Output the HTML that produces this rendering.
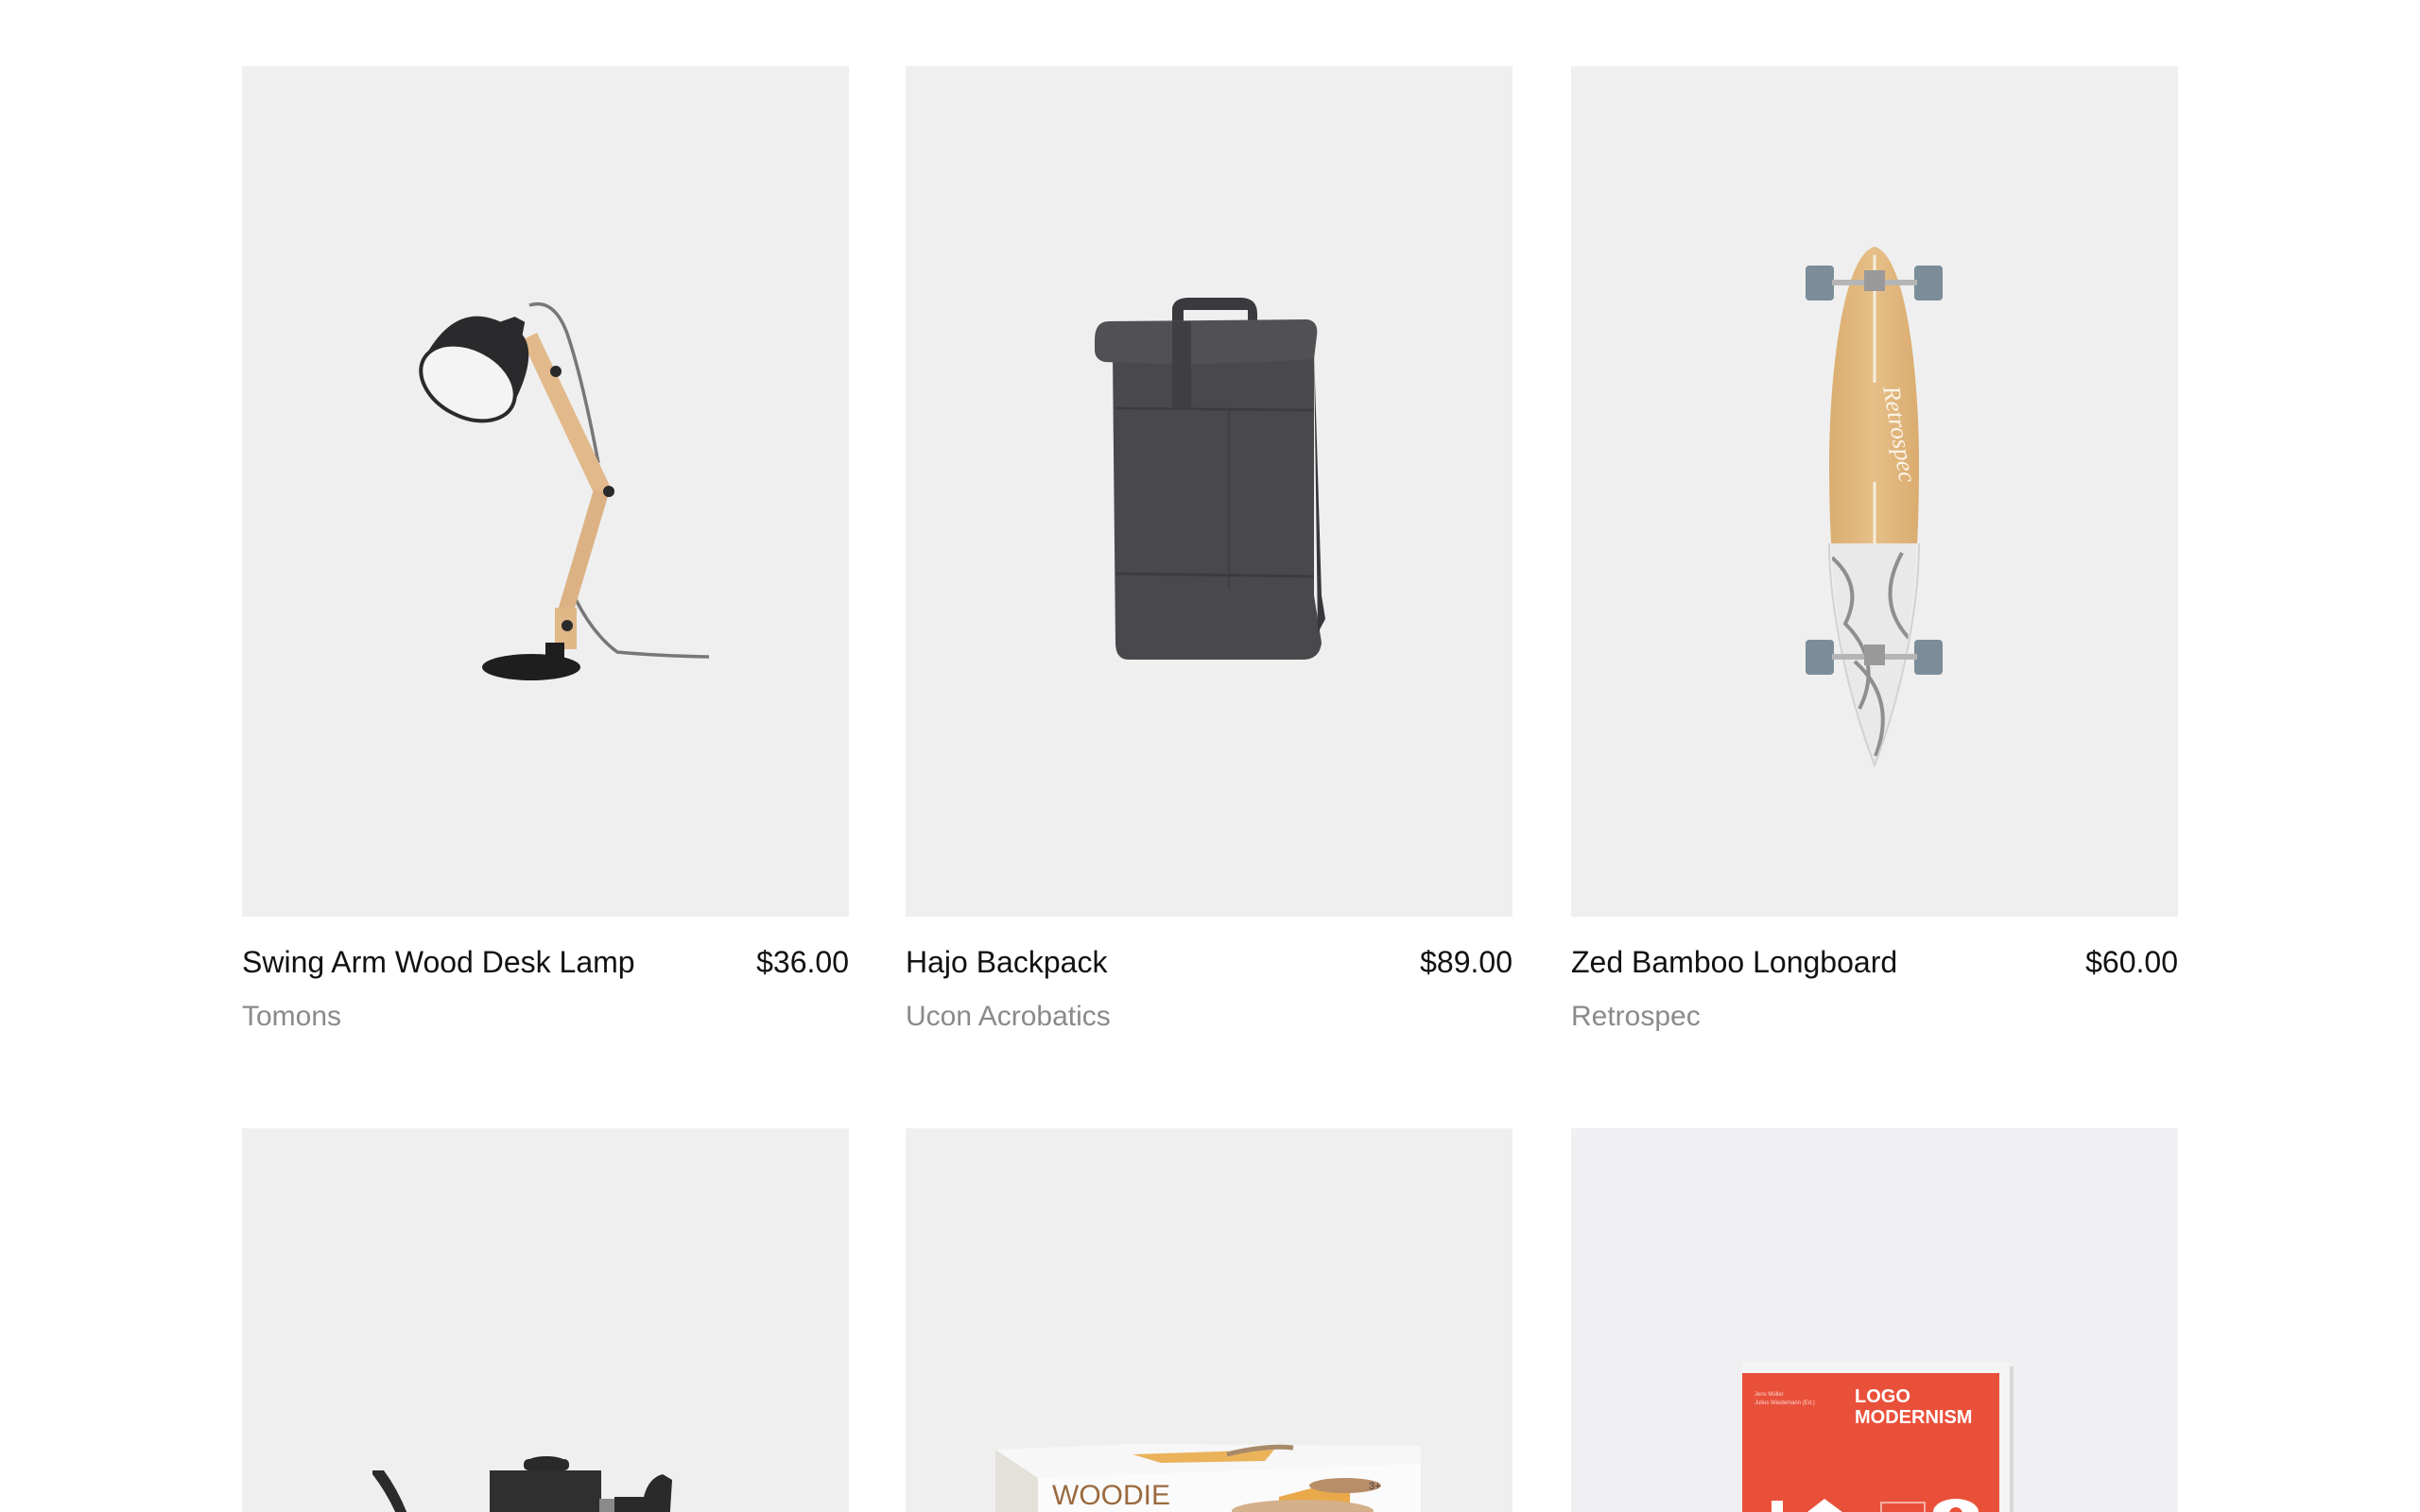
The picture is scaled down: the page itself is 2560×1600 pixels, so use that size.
<!DOCTYPE html>
<html><head><meta charset="utf-8">
<style>
html,body{margin:0;padding:0;background:#fff;width:2560px;height:1600px;overflow:hidden;font-family:"Liberation Sans",sans-serif;}
#wrap{position:relative;width:2560px;height:1600px;overflow:hidden;}
.card{position:absolute;width:642px;}
.img{width:642px;height:900px;background:#efefef;position:relative;overflow:hidden;}
.img.short{height:406px;}
.img svg{position:absolute;left:0;top:0;}
.row{display:flex;justify-content:space-between;margin-top:28px;font-size:32px;color:#111;line-height:40px;}
.brand{font-size:30px;color:#8a8a8a;margin-top:18px;line-height:40px;}
</style></head><body><div id="wrap">

<div class="card" style="left:256px;top:70px">
 <div class="img">
  <svg width="642" height="900" viewBox="0 0 642 900">
   <path d="M 304 253 Q 330 245 344 283 Q 360 330 377 420" stroke="#777" stroke-width="3.5" fill="none"/>
   <path d="M 351 560 Q 370 600 397 620 Q 440 624 494 625" stroke="#777" stroke-width="3.5" fill="none"/>
   <path d="M 296 290 L 312 282 L 390 446 L 374 456 Z" fill="#e2b98a"/>
   <path d="M 372 448 L 388 452 L 350 580 L 334 576 Z" fill="#dcb284"/>
   <rect x="331" y="573" width="23" height="44" fill="#e0b888"/>
   <circle cx="388" cy="450" r="6" fill="#2a2a2a"/>
   <circle cx="344" cy="592" r="6" fill="#2a2a2a"/>
   <circle cx="332" cy="323" r="6" fill="#2a2a2a"/>
   <g transform="rotate(28 239 335)">
    <path d="M 186 335 Q 186 265 239 262 L 250 250 L 262 250 L 266 263 Q 292 275 292 335 Z" fill="#2a2a2c"/>
    <ellipse cx="239" cy="335" rx="53" ry="36" fill="#f4f4f4" stroke="#2a2a2c" stroke-width="4"/>
   </g>
   <rect x="321" y="610" width="20" height="24" fill="#1e1e1e"/>
   <ellipse cx="306" cy="636" rx="52" ry="14" fill="#1e1e1e"/>
  </svg>
 </div>
 <div class="row"><span>Swing Arm Wood Desk Lamp</span><span>$36.00</span></div>
 <div class="brand">Tomons</div>
</div>

<div class="card" style="left:958px;top:70px">
 <div class="img">
  <svg width="642" height="900" viewBox="0 0 642 900">
   <path d="M 282 272 L 282 256 Q 284 245 300 245 L 356 245 Q 372 246 372 262 L 372 272 L 362 272 L 362 258 L 294 258 L 294 272 Z" fill="#3a3a3e"/>
   <path d="M 219 305 L 432 300 L 432 560 L 440 610 Q 438 628 420 628 L 236 628 Q 222 628 222 610 Z" fill="#48484d"/>
   <path d="M 432 300 L 440 560 L 444 585 L 436 600 Z" fill="#38383c"/>
   <path d="M 200 290 Q 200 270 215 270 L 425 268 Q 437 270 435 285 L 432 310 Q 320 318 210 313 Q 200 310 200 300 Z" fill="#505055"/>
   <rect x="282" y="270" width="20" height="92" fill="#3e3e43"/>
   <path d="M 222 362 L 432 364" stroke="#3c3c40" stroke-width="2.5"/>
   <path d="M 342 364 L 342 554" stroke="#3c3c40" stroke-width="1.5"/>
   <path d="M 222 537 L 432 540" stroke="#3c3c40" stroke-width="3"/>
  </svg>
 </div>
 <div class="row"><span>Hajo Backpack</span><span>$89.00</span></div>
 <div class="brand">Ucon Acrobatics</div>
</div>

<div class="card" style="left:1662px;top:70px">
 <div class="img">
  <svg width="642" height="900" viewBox="0 0 642 900">
   <defs>
    <linearGradient id="bw" x1="0" x2="1"><stop offset="0" stop-color="#d8a86a"/><stop offset=".5" stop-color="#e6bf88"/><stop offset="1" stop-color="#d7a769"/></linearGradient>
    <clipPath id="bc"><path d="M321 191 C 355 200 368 330 368 420 C 368 560 355 650 321 740 C 287 650 273 560 273 420 C 273 330 287 200 321 191 Z"/></clipPath>
   </defs>
   <g clip-path="url(#bc)">
    <rect x="260" y="180" width="120" height="325" fill="url(#bw)"/>
    <rect x="260" y="505" width="120" height="245" fill="#e9e9e9"/>
    <path d="M 276 520 Q 310 550 290 590 Q 330 630 305 680 M 350 515 Q 320 570 362 610 M 300 630 Q 345 670 322 730 M 278 640 Q 300 660 285 700" stroke="#8f8f8f" stroke-width="4" fill="none"/>
   </g>
   <path d="M 273 505 C 273 560 287 650 321 740 C 355 650 368 560 368 505" stroke="#d2d2d2" stroke-width="2" fill="none"/>
   <line x1="321" y1="200" x2="321" y2="335" stroke="#f7eedf" stroke-width="3"/>
   <line x1="321" y1="440" x2="321" y2="505" stroke="#f7eedf" stroke-width="3"/>
   <text font-size="26" fill="#fbf4e8" font-style="italic" font-family="Liberation Serif, serif" transform="translate(330 340) rotate(80)">Retrospec</text>
   <rect x="248" y="211" width="30" height="37" rx="4" fill="#7b8d98"/>
   <rect x="363" y="211" width="30" height="37" rx="4" fill="#7b8d98"/>
   <rect x="276" y="226" width="90" height="6" fill="#b5b5b5"/>
   <rect x="310" y="216" width="22" height="22" fill="#999"/>
   <rect x="248" y="607" width="30" height="37" rx="4" fill="#7b8d98"/>
   <rect x="363" y="607" width="30" height="37" rx="4" fill="#7b8d98"/>
   <rect x="276" y="622" width="90" height="6" fill="#b5b5b5"/>
   <rect x="310" y="612" width="22" height="22" fill="#999"/>
  </svg>
 </div>
 <div class="row"><span>Zed Bamboo Longboard</span><span>$60.00</span></div>
 <div class="brand">Retrospec</div>
</div>

<div class="card" style="left:256px;top:1194px">
 <div class="img short">
  <svg width="642" height="406" viewBox="0 0 642 406">
   <path d="M 138 362 L 150 362 Q 178 400 190 460 L 180 460 Q 168 405 138 366 Z" fill="#2b2b2b"/>
   <ellipse cx="322" cy="356" rx="24" ry="9" fill="#262626"/>
   <rect x="298" y="350" width="48" height="12" rx="5" fill="#2a2a2a"/>
   <rect x="262" y="362" width="118" height="100" fill="#2f2f2f"/>
   <rect x="378" y="392" width="16" height="40" fill="#8a8a8a"/>
   <path d="M 394 390 L 425 390 Q 430 370 445 366 L 455 372 L 452 420 L 394 420 Z" fill="#2a2a2a"/>
  </svg>
 </div>
</div>

<div class="card" style="left:958px;top:1194px">
 <div class="img short">
  <svg width="642" height="406" viewBox="0 0 642 406">
   <path d="M 95 340 L 240 334 L 545 336 L 545 460 L 95 460 Z" fill="#f7f7f7"/>
   <path d="M 95 340 L 140 370 L 140 460 L 95 460 Z" fill="#e4e0da"/>
   <path d="M 140 370 L 545 355 L 545 460 L 140 460 Z" fill="#fbfbfb"/>
   <path d="M 240 345 L 390 340 L 380 352 L 270 354 Z" fill="#eab35a"/>
   <path d="M 340 345 Q 380 335 410 338" stroke="#a88a6a" stroke-width="5" fill="none"/>
   <text x="155" y="398" font-size="30" fill="#9b6a3e" font-family="Liberation Sans Narrow, Liberation Sans, sans-serif">WOODIE</text>
   <path d="M 395 390 L 440 378 L 470 382 L 470 410 L 395 410 Z" fill="#e9a94a"/>
   <ellipse cx="465" cy="378" rx="38" ry="8" fill="#b88e68"/>
   <ellipse cx="420" cy="405" rx="75" ry="12" fill="#d4b08b"/>
   <text x="490" y="382" font-size="11" fill="#444">3+</text>
  </svg>
 </div>
</div>

<div class="card" style="left:1662px;top:1194px">
 <div class="img short" style="background:#f0f0f2">
  <svg width="642" height="406" viewBox="0 0 642 406">
   <rect x="186" y="252" width="282" height="300" fill="#d8d8da"/>
   <rect x="181" y="247" width="283" height="300" fill="#f4f4f4"/>
   <rect x="181" y="259" width="272" height="290" fill="#e9503a"/>
   <text x="194" y="283" font-size="6" fill="#fbd3cb">Jens Müller</text>
   <text x="194" y="292" font-size="6" fill="#fbd3cb">Julius Wiedemann (Ed.)</text>
   <text x="300" y="290" font-size="20" font-weight="bold" fill="#fff">LOGO</text>
   <text x="300" y="312" font-size="20" font-weight="bold" fill="#fff">MODERNISM</text>
   <path d="M 212 394 L 224 394 L 224 420 L 212 420 Z M 224 406 L 245 406 L 245 420 L 224 420 Z" fill="#fff"/>
   <path d="M 268 392 L 295 412 L 268 420 L 250 406 Z" fill="#fff"/>
   <rect x="328" y="396" width="46" height="24" fill="none" stroke="#f7b0a2" stroke-width="2"/>
   <ellipse cx="407" cy="406" rx="24" ry="14" fill="#fff"/>
   <circle cx="407" cy="408" r="7" fill="#e9503a"/>
  </svg>
 </div>
</div>

</div></body></html>
